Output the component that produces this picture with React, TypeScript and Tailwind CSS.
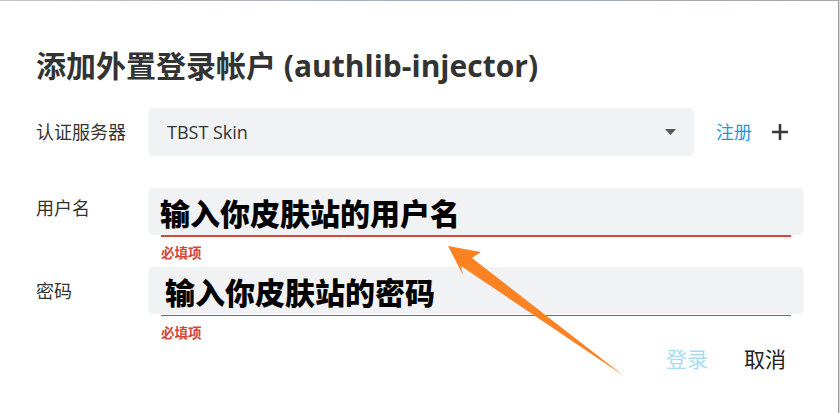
import React from "react";

const ui = { fontFamily: "'Open Sans', 'Noto Sans CJK SC', sans-serif" };
const cjkBlack = { fontFamily: "'Noto Sans CJK SC', sans-serif" };

export default function App() {
  return (
    <div className="relative w-[840px] h-[413px] bg-white overflow-hidden" style={ui}>
      <div className="h-px w-full bg-gradient-to-r from-[#cbc3ba] via-[#9eaec4] to-[#a6a6ac]" />
      <div className="absolute right-0 top-0 h-full w-[2px] flex">
        <div className="w-px h-full bg-[#9c9c9c]" />
        <div className="w-px h-full bg-[#d8d8d8]" />
      </div>

      <div className="pl-[36px] w-[803px] flex flex-col">
        {/* Title */}
        <div className="mt-[47px] h-[36px] flex items-center text-[30px] font-bold text-[#333333] leading-none whitespace-nowrap">
          添加外置登录帐户 (authlib-injector)
        </div>

        {/* Server row */}
        <div className="mt-[24px] h-[48px] flex items-center">
          <div className="w-[113px] text-[18px] text-[#333333] leading-none">认证服务器</div>
          <div className="w-[545px] h-[48px] rounded-[4px] bg-[#f1f2f4] flex items-center pl-[18px] pr-[18px]">
            <span className="flex-1 text-[18px] text-[#333333] leading-none">TBST Skin</span>
            <svg width="11" height="6" viewBox="0 0 11 6">
              <path d="M0 0 L11 0 L5.5 6 Z" fill="#585858" />
            </svg>
          </div>
          <span className="ml-[22px] text-[18px] text-[#1c9ad8] leading-none">注册</span>
          <svg className="ml-[19px]" width="18" height="18" viewBox="0 0 18 18">
            <path d="M9 1 V17 M1 9 H17" stroke="#3a3a3a" strokeWidth="2.6" />
          </svg>
        </div>

        {/* Username row */}
        <div className="mt-[32px] flex">
          <div className="w-[113px] pt-[9px] text-[18px] text-[#333333] leading-[22px]">用户名</div>
          <div className="flex-1 flex flex-col">
            <div className="h-[47px] rounded-[4px] bg-[#f1f2f4] flex items-center pl-[11px]">
              <span className="text-[30px] font-black text-black leading-none" style={cjkBlack}>
                输入你皮肤站的用户名
              </span>
            </div>
            <div className="mx-[12px] h-[2px] bg-[#d5453a]" />
            <div className="pl-[12px] mt-[9px] h-[16px] flex items-center text-[13.5px] font-semibold text-[#d5453a] leading-none">
              必填项
            </div>
          </div>
        </div>

        {/* Password row */}
        <div className="mt-[5px] flex">
          <div className="w-[113px] h-[47px] flex items-center text-[18px] text-[#333333] leading-none">密码</div>
          <div className="flex-1 flex flex-col">
            <div className="h-[47px] rounded-[4px] bg-[#f1f2f4] flex items-center pl-[16px]">
              <span className="text-[30px] font-black text-black leading-none" style={cjkBlack}>
                输入你皮肤站的密码
              </span>
            </div>
            <div className="mt-[1px] mx-[12px] h-px bg-[#d5453a]" />
            <div className="pl-[12px] mt-[10px] h-[16px] flex items-center text-[13.5px] font-semibold text-[#d5453a] leading-none">
              必填项
            </div>
          </div>
        </div>

        {/* Buttons */}
        <div className="mt-[5px] h-[24px] flex justify-end items-center gap-[36px] pr-[17px]">
          <span className="text-[21px] text-[#a8dcf5] leading-none">登录</span>
          <span className="text-[21px] text-[#222222] leading-none">取消</span>
        </div>
      </div>

      {/* Annotation arrow */}
      <svg className="absolute left-0 top-0 pointer-events-none" width="840" height="413" viewBox="0 0 840 413">
        <polygon
          points="448,246 481,252 472,258 624,376 461,266 463,275"
          fill="#fd8224"
        />
      </svg>
    </div>
  );
}
